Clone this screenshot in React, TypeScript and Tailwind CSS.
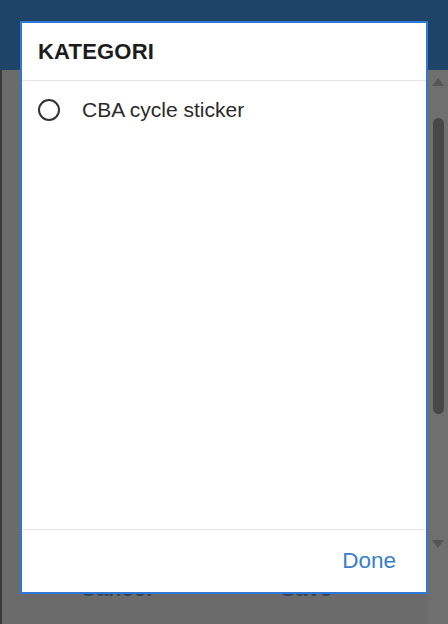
import { useState } from 'react';

const categories = ['CBA cycle sticker'];

function Radio({ checked }: { checked: boolean }) {
  return (
    <span className="flex h-[22px] w-[22px] items-center justify-center rounded-full border-2 border-[#333333]">
      {checked && <span className="h-[11px] w-[11px] rounded-full bg-[#333333]" />}
    </span>
  );
}

function ScrollTrack() {
  return (
    <div className="flex w-[20px] flex-col items-center bg-[#6f6f6f] pt-[6px] pb-[10px]">
      <svg width="12" height="8" viewBox="0 0 12 8" className="mt-[2px]">
        <path d="M6 0 L12 8 L0 8 Z" fill="#555555" />
      </svg>
      <div className="mt-[32px] h-[296px] w-[11px] rounded-full bg-[#474747]" />
      <div className="flex-1" />
      <svg width="12" height="8" viewBox="0 0 12 8" className="mb-[66px]">
        <path d="M0 0 L12 0 L6 8 Z" fill="#555555" />
      </svg>
    </div>
  );
}

export default function App() {
  const [picked, setPicked] = useState<string | null>(null);

  return (
    <div className="relative flex h-[624px] w-[448px] flex-col overflow-hidden bg-[#6b6b6b] font-['Liberation_Sans',Arial,sans-serif]">
      <div className="h-[70px] shrink-0 bg-[#1e4467]" />

      <div className="flex flex-1 border-l-2 border-[#3a3a3a]">
        <div className="flex flex-1 flex-col justify-end pb-[19px]">
          <div className="flex justify-between px-[78px] pr-[96px] text-[22px] font-bold text-[#1b2d52] opacity-60">
            <span>Cancel</span>
            <span>Save</span>
          </div>
        </div>
        <ScrollTrack />
      </div>

      {/* category picker */}
      <div className="absolute top-[21px] left-[20px] flex h-[573px] w-[408px] flex-col border-2 border-[#2f78d6] bg-white">
        <div className="flex h-[58px] shrink-0 items-center border-b border-[#e3e3e3] px-[16px]">
          <h2 className="text-[22px] font-bold tracking-[0.2px] text-[#1c1c1c]">KATEGORI</h2>
        </div>

        <div className="flex-1">
          {categories.map(c => (
            <button
              key={c}
              onClick={() => setPicked(c)}
              className="flex h-[57px] w-full items-center gap-[22px] pl-[16px] text-left"
            >
              <Radio checked={picked === c} />
              <span className="text-[21px] text-[#2a2a2a]">{c}</span>
            </button>
          ))}
        </div>

        <div className="flex h-[63px] shrink-0 items-center justify-end border-t border-[#e3e3e3] pr-[30px]">
          <button className="text-[22.5px] text-[#3a7ec8]">Done</button>
        </div>
      </div>
    </div>
  );
}
